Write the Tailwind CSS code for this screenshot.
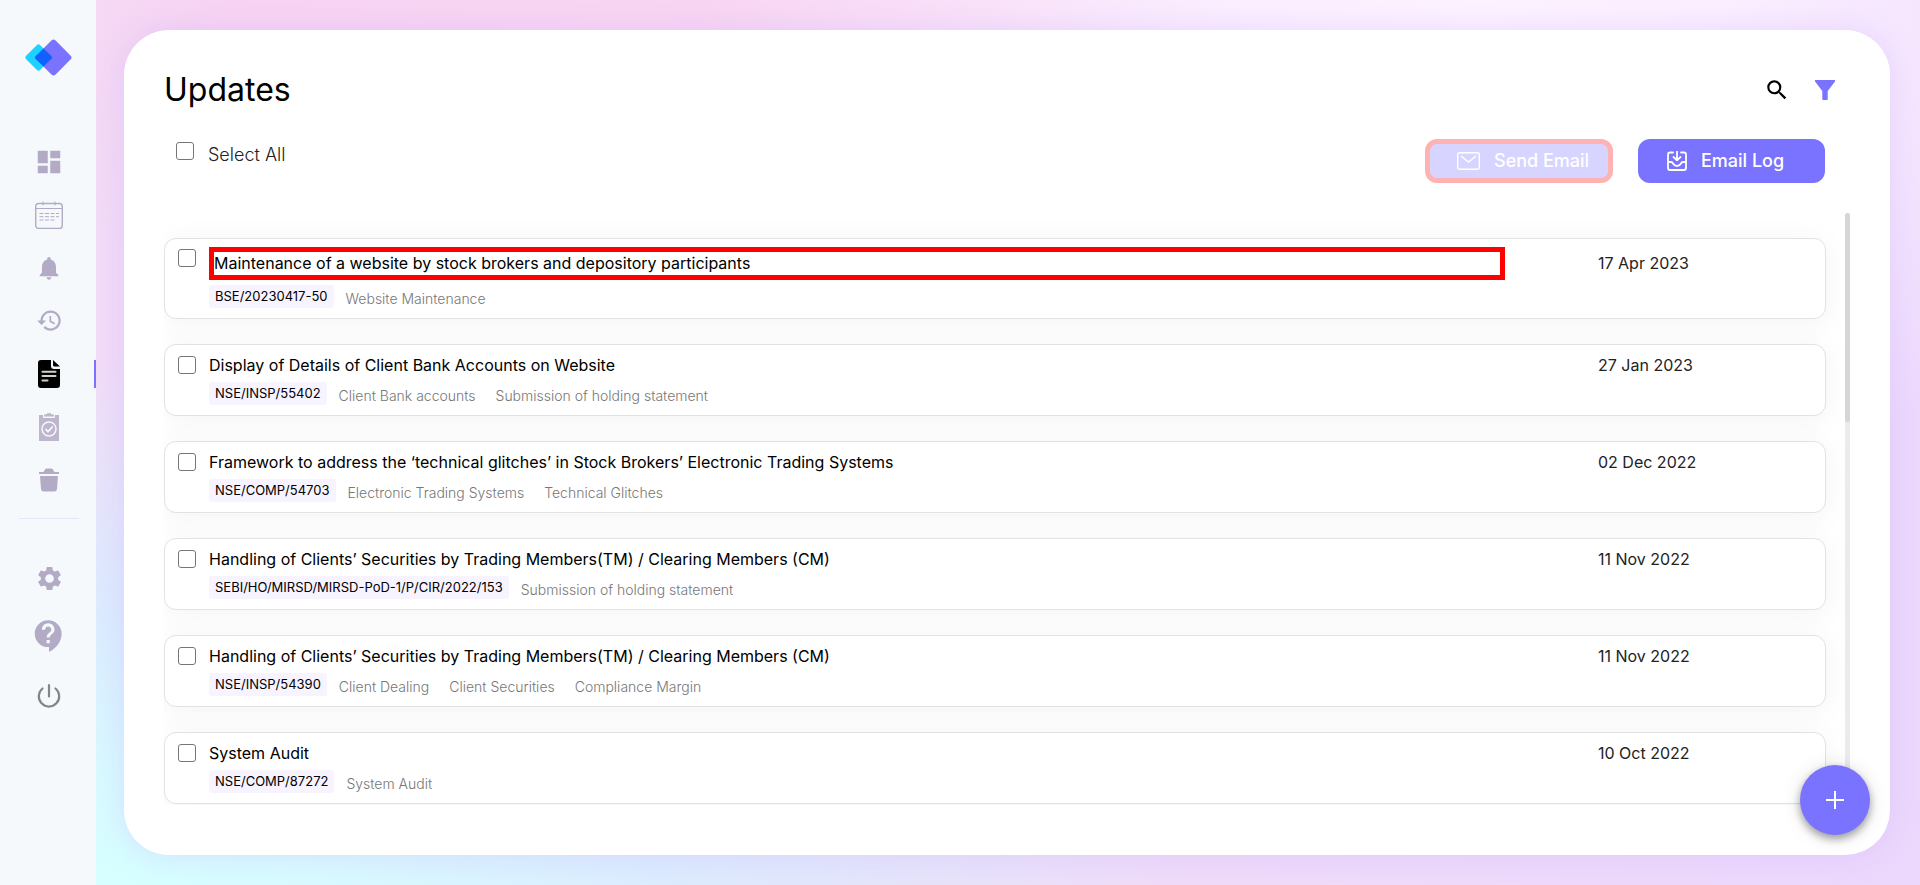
<!DOCTYPE html>
<html lang="en">
<head>
<meta charset="utf-8">
<title>Updates</title>
<script src="https://cdn.jsdelivr.net/npm/@tailwindcss/browser@4"></script>
</head>
<body class="flex min-h-screen bg-[#efdafa] font-[Inter,'Noto_Sans',sans-serif] text-black">
<aside class="flex w-24 shrink-0 flex-col items-center bg-[#f5f9fc] pt-9">
  <a href="#" aria-label="Home" class="pl-0.5"><svg class="h-11 w-[50px]" viewBox="0 0 50 44"><rect x="4.500" y="11.500" width="20" height="20" rx="2.500" transform="rotate(45 14.500 21.500)" fill="#1fd1ff"/><rect x="16" y="8" width="27" height="27" rx="3" transform="rotate(45 29.500 21.500)" fill="#7a73ff"/><path d="M19.500 12.500 27.500 20.300q1.300 1.200 0 2.400L19.500 30.500 11.500 22.700q-1.300-1.200 0-2.400z" fill="#1161ff"/></svg></a>
  <nav class="mt-[55px] flex w-full flex-col items-center pl-0.5 text-[#b3abc6]">
    <a href="#" aria-label="Dashboard" class="flex h-[53px] items-center"><svg class="size-[30px]" viewBox="0 0 24 24" fill="currentColor"><path d="M3 13h8V3H3v10zm0 8h8v-6H3v6zm10 0h8V11h-8v10zm0-18v6h8V3h-8z"/></svg></a>
    <a href="#" aria-label="Calendar" class="flex h-[53px] items-center"><svg class="size-7" viewBox="0 0 28 28" fill="none" stroke="currentColor"><rect x=".7" y="2.500" width="26.600" height="25" rx="3" stroke-width="1.400"/><path d="M1 7.500h26M8 .5v4M20 .5v4"/><path d="M4.500 12.500h4m1.500 0h4m1.500 0h4m1.500 0h3M4.500 15.700h4m1.500 0h4m1.500 0h4m1.500 0h3M4.500 19h4m1.500 0h4m1.500 0h4"/></svg></a>
    <a href="#" aria-label="Notifications" class="flex h-[53px] items-center"><svg class="size-7" viewBox="0 0 24 24" fill="currentColor"><path d="M12 22c1.100 0 2-.9 2-2h-4c0 1.100.9 2 2 2zm6-6v-5c0-3.070-1.630-5.640-4.500-6.320V4c0-.83-.67-1.500-1.500-1.500s-1.500.67-1.500 1.500v.68C7.640 5.360 6 7.920 6 11v5l-2 2v1h16v-1l-2-2z"/></svg></a>
    <a href="#" aria-label="History" class="flex h-[53px] items-center"><svg class="size-[27px]" viewBox="0 0 24 24" fill="currentColor"><path d="M13 3c-4.970 0-9 4.030-9 9H1l3.890 3.890.07.14L9 12H6c0-3.870 3.130-7 7-7s7 3.130 7 7-3.130 7-7 7c-1.930 0-3.680-.79-4.940-2.060l-1.420 1.420C8.270 19.990 10.510 21 13 21c4.970 0 9-4.030 9-9s-4.030-9-9-9zm-1 5v5l4.280 2.540.72-1.210-3.500-2.080V8H12z"/></svg></a>
    <a href="#" aria-label="Updates" aria-current="page" class="flex h-[53px] w-full items-center justify-center"><span class="w-0.5"></span><svg class="mx-auto h-7 w-[22px] text-black" viewBox="0 0 22 28"><path d="M3 0h10v6a3 3 0 0 0 3 3h6v16a3 3 0 0 1-3 3H3a3 3 0 0 1-3-3V3a3 3 0 0 1 3-3zM15 0l7 6.500h-5.500Q15 6.500 15 5z" fill="currentColor"/><path d="M4.500 11.700h13M4.500 16h13M4.500 20.500h5" stroke="#cfd2cd" stroke-width="2" stroke-linecap="round"/></svg><span class="h-7 w-0.5 bg-[#7a73ff]"></span></a>
    <a href="#" aria-label="Tasks" class="flex h-[53px] items-center"><svg class="h-7 w-[22px]" viewBox="0 0 22 28"><path d="M1 2h4v2q0 1 1 1h10q1 0 1-1V2h4v26H1zM6 3.500V2q0-.5.500-.5H8Q9 0 11 0t3 1.500h1.500q.5 0 .5.500v1.500z" fill="#bdb6cd"/><circle cx="11" cy="16" r="7" fill="none" stroke="#f5f9fc" stroke-width="1.500"/><path d="m7.500 16 2.500 2.700 4.800-5.200" fill="none" stroke="#f5f9fc" stroke-width="1.800"/></svg></a>
    <a href="#" aria-label="Trash" class="flex h-[53px] items-center"><svg class="h-6 w-[22px]" viewBox="0 0 22 24" fill="currentColor"><path d="M1 4h4.500L7 1.500Q7.500.500 8.500.500h5q1 0 1.500 1L16.500 4H21v2H1zM2 8h18l-1 13q-.3 2.500-2.500 2.500h-11Q3.300 23.500 3 21z"/></svg></a>
    <hr class="mt-3 w-[60px] border-[#e9e4ff]">
    <a href="#" aria-label="Settings" class="mt-[30px] flex h-[58px] items-center"><svg class="size-[29px]" viewBox="0 0 24 24" fill="currentColor"><path d="M19.140 12.940c.04-.3.06-.61.06-.94 0-.32-.02-.64-.07-.94l2.030-1.580a.49.49 0 0 0 .12-.61l-1.920-3.320a.488.488 0 0 0-.59-.22l-2.390.96c-.5-.38-1.030-.7-1.620-.94l-.36-2.540a.484.484 0 0 0-.48-.41h-3.840c-.24 0-.43.17-.47.41l-.36 2.540c-.59.24-1.130.57-1.620.94l-2.390-.96c-.22-.08-.47 0-.59.22L2.740 8.870c-.12.21-.08.47.12.61l2.030 1.580c-.05.3-.09.63-.09.94s.02.64.07.94l-2.030 1.580a.49.49 0 0 0-.12.61l1.920 3.320c.12.22.37.29.59.22l2.390-.96c.5.38 1.030.7 1.620.94l.36 2.540c.05.24.24.41.48.41h3.840c.24 0 .44-.17.47-.41l.36-2.540c.59-.24 1.130-.56 1.620-.94l2.390.96c.22.08.47 0 .59-.22l1.920-3.320c.12-.22.07-.47-.12-.61l-2.010-1.580zM12 15.600A3.600 3.600 0 1 1 12 8.400a3.600 3.600 0 0 1 0 7.200z"/></svg></a>
    <a href="#" aria-label="Help" class="flex h-[58px] items-center"><svg class="size-[38px]" viewBox="0 0 24 24" fill="currentColor"><path d="M11.500 2C6.810 2 3 5.810 3 10.500S6.810 19 11.500 19h.5v3c4.860-2.340 8-7 8-11.500C20 5.810 16.190 2 11.500 2zm1 14.500h-2v-2h2v2zm0-3.500h-2c0-3.250 3-3 3-5 0-1.100-.9-2-2-2s-2 .9-2 2h-2c0-2.210 1.790-4 4-4s4 1.790 4 4c0 2.500-3 2.750-3 5z"/></svg></a>
    <a href="#" aria-label="Log out" class="flex h-[62px] items-center text-[#858585]"><svg class="size-6" viewBox="0 0 24 24" fill="none" stroke="currentColor" stroke-width="2.200" stroke-linecap="round"><path d="M12 1.200v11.300M5.500 4.500a10.200 10.200 0 1 0 13 0"/></svg></a>
  </nav>
</aside>
<div class="flex flex-1 bg-[radial-gradient(ellipse_at_0%_100%,#d6ffff_0%,#d8fbff_8%,#dcecfe_22%,transparent_42%),radial-gradient(ellipse_at_76%_0%,#fdf3ff_0%,#fbefff_12%,transparent_40%),radial-gradient(ellipse_at_29%_0%,#f8d6f2_0%,#f8d4f2_22%,transparent_34%),linear-gradient(to_right,#f2dcf6,#f0dcf8_50%,#ecd8fd)] py-[30px] pr-[30px] pl-7">
  <main class="flex flex-1 flex-col rounded-[45px] bg-white pt-10 pr-10 pb-[50px] pl-10 shadow-[0_0_30px_rgba(190,160,255,0.3)]">
    <header class="flex items-center justify-between pr-[15px]">
      <h1 class="text-[32px] leading-10">Updates</h1>
      <div class="flex items-center gap-[25px]">
        <button aria-label="Search"><svg class="size-[26px]" viewBox="0 0 24 24" fill="currentColor"><path d="M15.500 14h-.79l-.28-.27A6.471 6.471 0 0 0 16 9.500 6.500 6.500 0 1 0 9.500 16c1.610 0 3.090-.59 4.230-1.570l.27.280v.79l5 4.990L20.490 19l-4.990-5zm-6 0C7.010 14 5 11.990 5 9.500S7.010 5 9.500 5 14 7.010 14 9.500 11.990 14 9.500 14z"/></svg></button>
        <button aria-label="Filter"><svg class="size-5" viewBox="0 0 20 20" fill="#7a73ff"><path d="M0 0h20v1.500L12.700 11v8.200q0 .8-.8.800H8.100q-.8 0-.8-.8V11L0 1.500z"/></svg></button>
      </div>
    </header>
    <div class="mt-[29px] flex items-start justify-between pr-[25px] pl-3">
      <label class="flex items-start gap-[14px] pt-[3px] text-lg leading-[26px] font-light text-[#222]"><input type="checkbox" class="size-[18px] appearance-none rounded-[3px] border border-[#767676] bg-white"><span>Select All</span></label>
      <div class="flex gap-[25px] text-lg font-medium text-white">
        <button disabled class="flex h-11 w-[188px] items-center gap-[14px] rounded-xl border-[5px] border-[#ffb2b2] bg-[#d7d5ff] pl-[27px] whitespace-nowrap"><svg class="h-[18px] w-[23px] shrink-0" viewBox="0 0 23 18" fill="none" stroke="currentColor" stroke-width="1.400"><rect x=".7" y=".7" width="21.600" height="16.600" rx="2"/><path d="m4 4 7.500 6L19 4"/></svg>Send Email</button>
        <button class="flex h-11 w-[187px] items-center gap-[14px] rounded-xl bg-[#7a73ff] pl-[29px]"><svg class="size-5 shrink-0" viewBox="0 0 20 20" fill="none" stroke="currentColor" stroke-width="1.800" stroke-linejoin="round" stroke-linecap="round"><path d="M6 1.500H3Q1 1.500 1 3.500v13.500q0 2 2 2h14q2 0 2-2V3.500q0-2-2-2h-3M10 0v9M6.500 6l3.500 3.300L13.500 6M1 11h3q1.500 0 2 1.500Q7.500 15 10 15t4-2.500Q14.500 11 16 11h3"/></svg>Email Log</button>
      </div>
    </div>
    <section class="mt-[30px] flex h-[592px] justify-between overflow-hidden">
      <ul id="list" class="flex flex-1 flex-col gap-[25px] pt-[25px]"></ul>
      <div class="ml-[19px] w-[5px] rounded-full bg-[#ebebeb]"><div class="h-[209px] rounded-full bg-[#d6d6d6]"></div></div>
    </section>
  </main>
</div>
<button aria-label="Add update" class="fixed right-[50px] bottom-[50px] flex size-[70px] items-center justify-center rounded-full bg-[#7a73ff] shadow-[0_4px_8px_rgba(0,0,0,0.35),0_2px_20px_rgba(0,0,0,0.12)]"><svg class="size-[18px]" viewBox="0 0 18 18" stroke="#fff" stroke-width="2"><path d="M9 0v18M0 9h18"/></svg></button>
<script>
const updates = [
  ['Maintenance of a website by stock brokers and depository participants', '17 Apr 2023', 'BSE/20230417-50', ['Website Maintenance']],
  ['Display of Details of Client Bank Accounts on Website', '27 Jan 2023', 'NSE/INSP/55402', ['Client Bank accounts', 'Submission of holding statement']],
  ['Framework to address the ‘technical glitches’ in Stock Brokers’ Electronic Trading Systems', '02 Dec 2022', 'NSE/COMP/54703', ['Electronic Trading Systems', 'Technical Glitches']],
  ['Handling of Clients’ Securities by Trading Members(TM) / Clearing Members (CM)', '11 Nov 2022', 'SEBI/HO/MIRSD/MIRSD-PoD-1/P/CIR/2022/153', ['Submission of holding statement']],
  ['Handling of Clients’ Securities by Trading Members(TM) / Clearing Members (CM)', '11 Nov 2022', 'NSE/INSP/54390', ['Client Dealing', 'Client Securities', 'Compliance Margin']],
  ['System Audit', '10 Oct 2022', 'NSE/COMP/87272', ['System Audit']]
];
document.getElementById('list').innerHTML = updates.map(([title, date, code, tags], i) => `
  <li class="${i ? 'flex items-start rounded-xl border border-[#e2e2e2] bg-white pt-[9px] pb-[10px] pl-[13px] shadow-[0_4px_30px_rgba(0,0,0,0.05)]' : 'flex items-start rounded-xl border border-[#e2e2e2] bg-white pt-2 pb-[10px] pl-[13px] shadow-[0_4px_30px_rgba(0,0,0,0.05)]'}">
    <input type="checkbox" id="u${i}" class="mt-0.5 mr-[13px] size-[18px] shrink-0 appearance-none rounded-[3px] border border-[#767676] bg-white">
    <div class="flex-1">
      <label for="u${i}" class="${i ? 'block text-base leading-[23px]' : 'block border-[5px] border-[#ff0000] text-base leading-[23px]'}">${title}</label>
      <div class="mt-[5px] flex items-center gap-5">
        <span class="-mr-2 rounded-[3px] bg-[#f7f3ff] px-1.5 text-[13px] leading-[23px]">${code}</span>
        ${tags.map(t => `<span class="pt-1 text-sm leading-[19px] font-light text-[#777]">${t}</span>`).join('')}
      </div>
    </div>
    <time class="${i ? 'ml-[93px] w-[227px] text-base leading-[23px] text-[#222]' : 'ml-[93px] w-[227px] pt-[5px] text-base leading-[23px] text-[#222]'}">${date}</time>
  </li>`).join('');
</script>
</body>
</html>
